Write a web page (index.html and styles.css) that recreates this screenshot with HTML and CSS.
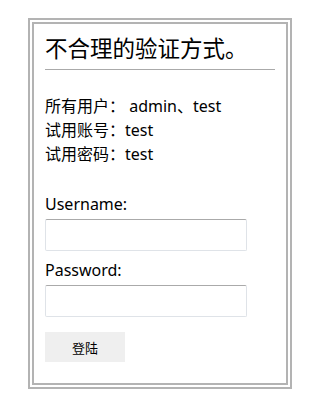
FILE: index.html
```html
<!DOCTYPE html>
<html lang="zh-CN">
<head>
  <meta charset="UTF-8">
  <meta name="viewport" content="width=device-width, initial-scale=1.0">
  <title>不合理的验证方式</title>
  <link rel="stylesheet" href="styles.css">
</head>
<body>
  <div class="box">
    <h1 class="title">不合理的验证方式。</h1>
    <p class="info">
      所有用户： admin、test<br>
      试用账号：test<br>
      试用密码：test
    </p>
    <form class="login">
      <label for="username">Username:</label>
      <input type="text" id="username">
      <label for="password" class="pw-label">Password:</label>
      <input type="password" id="password">
      <button type="button">登陆</button>
    </form>
  </div>
</body>
</html>
```

FILE: styles.css
```css
body {
  margin: 0;
  padding: 18px 0 0 28px;
  font-family: "Noto Sans", "Noto Sans CJK SC", sans-serif;
  color: #000;
  background: #fff;
}

.box {
  width: 230px;
  padding: 10px 11px 21px;
  border: 6px double #b3b3b3;
}

.title {
  margin: 0;
  padding-bottom: 5px;
  font-size: 22.5px;
  font-weight: normal;
  line-height: 30px;
  border-bottom: 1px solid #aaa;
}

.info {
  margin: 24px 0 0;
  font-size: 16px;
  line-height: 24px;
}

.login {
  display: flex;
  flex-direction: column;
  align-items: flex-start;
  margin-top: 26px;
}

.login label {
  font-size: 16px;
  line-height: 24px;
}

.login .pw-label {
  margin-top: 7px;
}

.login input {
  box-sizing: border-box;
  width: 202px;
  height: 32px;
  margin: 3px 0 0;
  padding: 0 6px;
  border: 1px solid #dfe3e8;
  border-top-color: #aaa;
  border-radius: 2px;
  outline: none;
}

.login button {
  width: 80px;
  height: 30px;
  margin-top: 15px;
  border: none;
  background: #efefef;
  font-family: "Noto Sans CJK SC", sans-serif;
  font-size: 13px;
  color: #000;
}
```
